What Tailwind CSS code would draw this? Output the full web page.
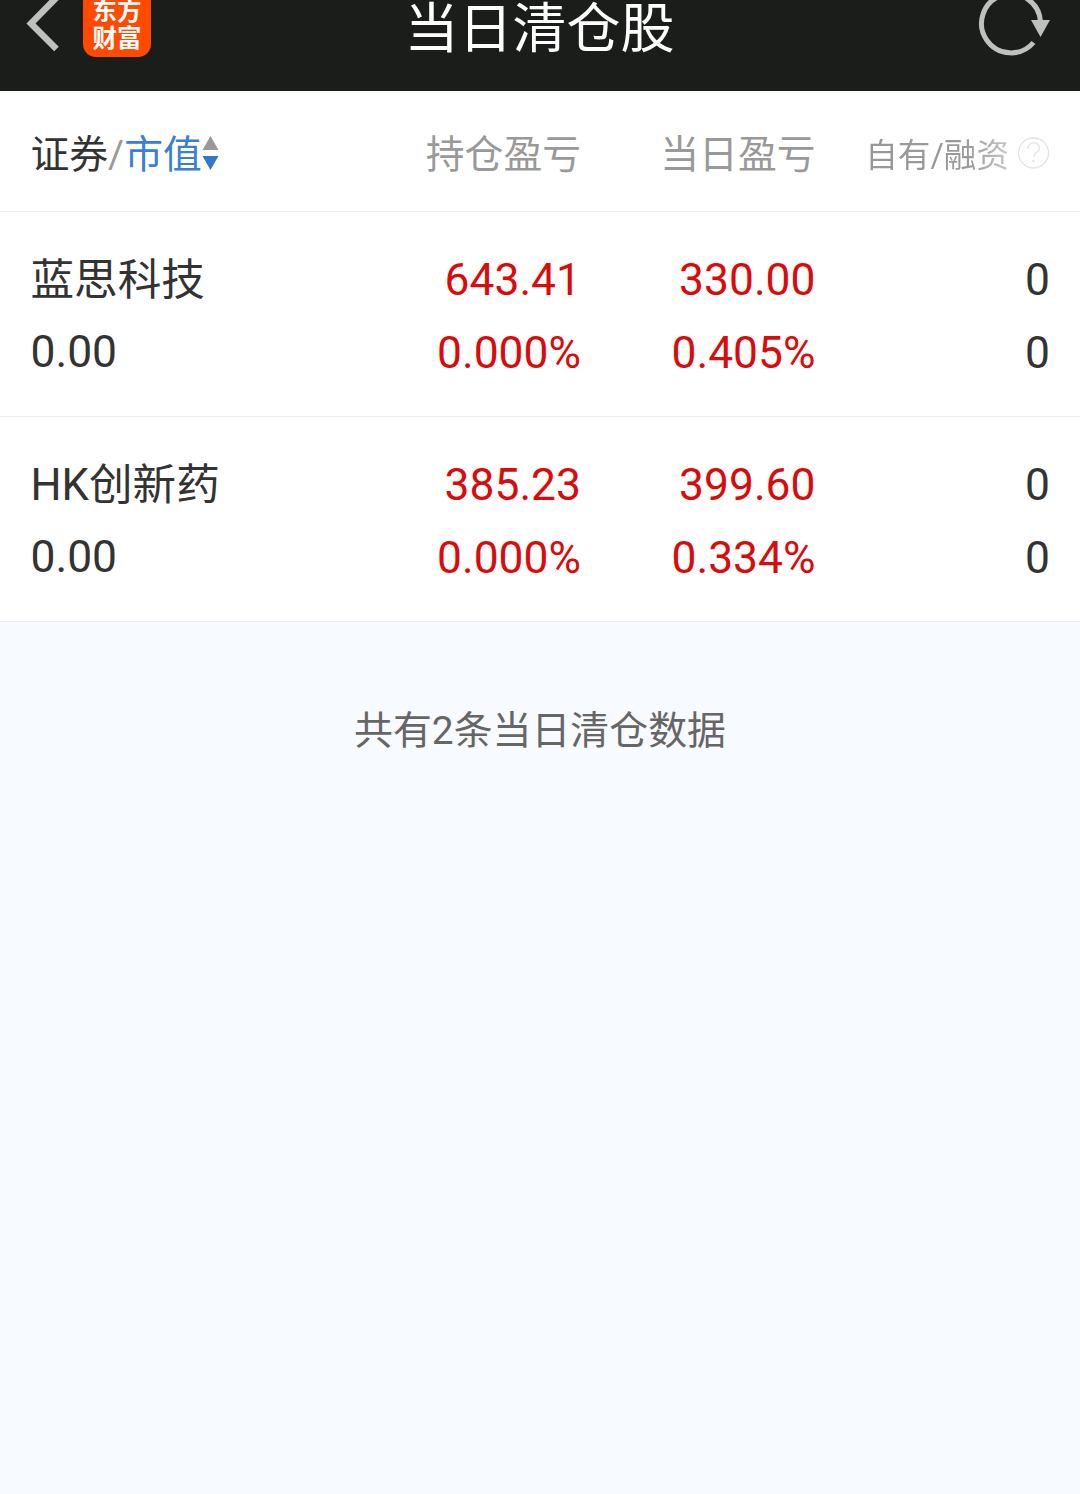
<!DOCTYPE html>
<html lang="zh-CN">
<head>
    <meta charset="UTF-8">
    <meta name="viewport" content="width=device-width, initial-scale=1.0">
    <title>当日清仓股</title>
    <script src="https://cdn.jsdelivr.net/npm/@tailwindcss/browser@4"></script>
</head>
<body class="bg-[#f7faff] min-h-screen font-[Roboto,'Noto_Sans_CJK_SC',sans-serif] text-[#333] overflow-hidden">
    <!-- Title bar -->
    <header class="h-[91px] bg-[#1a1d1a] flex items-start justify-between">
        <div class="w-[200px] flex shrink-0">
            <svg class="w-[83px] h-[91px] shrink-0" viewBox="0 0 83 91" fill="none">
                <path d="M58 -4L31 23.500L56.500 49" stroke="#c0c0c0" stroke-width="6.500" />
            </svg>
            <div class="w-[68px] h-[68px] -mt-[11px] rounded-[13px] bg-[#ff4a00] text-white text-[24.500px] leading-[27px] font-bold text-center pt-[7px] font-['Noto_Sans_CJK_SC',sans-serif]">
                <div>东方</div>
                <div>财富</div>
            </div>
        </div>
        <h1 class="text-white text-[54px] leading-[60px] -ml-[1px]">当日清仓股</h1>
        <svg class="w-[200px] h-[91px] shrink-0" viewBox="880 0 200 91" fill="none">
            <path d="M1033.500 42.500A29.500 29.500 0 1 1 1040.500 22" stroke="#c0c0c0" stroke-width="5" />
            <path d="M1031 20H1050L1040.500 37Z" fill="#c0c0c0" />
        </svg>
    </header>

    <main>
        <!-- Column headings -->
        <div class="h-[121px] bg-white border-b border-[#eee] grid grid-cols-[315px_235px_234.500px_234.500px] pl-[31px] text-[38.800px] leading-[127px] text-right text-[#999] whitespace-nowrap">
            <div class="flex text-left h-[126px] items-center -ml-[0.500px]">
                <span class="text-[#333]">证券</span><span>/</span><span class="text-[#3a7fd5]">市值</span>
                <svg class="w-[17px] h-[36px] mb-[2px]" viewBox="0 0 17 36">
                    <path d="M0.500 15L8.500 1L16.500 15Z" fill="#999" />
                    <path d="M0.500 21L8.500 35L16.500 21Z" fill="#3277c8" />
                </svg>
            </div>
            <div>持仓盈亏</div>
            <div>当日盈亏</div>
            <div class="flex h-[128px] items-center justify-end gap-[9px] text-[32.600px] leading-[64px]">
                <span class="bg-linear-to-r from-[#999] from-70% to-[#c8c8c8] bg-clip-text text-transparent mt-[2px]">自有/融资</span>
                <svg class="w-[32px] h-[32px] mb-[4px]" viewBox="0 0 32 32" fill="none" stroke="#e2e2e2">
                    <circle cx="15.500" cy="16" r="15" stroke-width="1.300" />
                    <path d="M10 12C10 4 21.500 4 21.500 11.500C21.500 15.500 15.500 15 15.500 20" stroke-width="1.300" />
                    <circle cx="15.500" cy="24" r="0.800" fill="#e2e2e2" />
                </svg>
            </div>
        </div>

        <!-- Positions -->
        <div class="h-[205px] bg-white border-b border-[#eee] grid grid-cols-[315px_235px_234.500px_234.500px] pl-[31px] pt-[32px] text-[44.400px] leading-[73px] text-right">
            <div class="text-left -ml-[0.500px]">
                <div class="text-[43.600px] leading-[74px]">蓝思科技</div>
                <div class="leading-[68px]">0.00</div>
            </div>
            <div class="text-[#d90b0b]">
                <div>643.41</div>
                <div>0.000%</div>
            </div>
            <div class="text-[#d90b0b]">
                <div>330.00</div>
                <div>0.405%</div>
            </div>
            <div>
                <div>0</div>
                <div>0</div>
            </div>
        </div>
        <div class="h-[205px] bg-white border-b border-[#eee] grid grid-cols-[315px_235px_234.500px_234.500px] pl-[31px] pt-[32px] text-[44.400px] leading-[73px] text-right">
            <div class="text-left -ml-[0.500px]">
                <div class="text-[43.600px] leading-[74px]">HK创新药</div>
                <div class="leading-[68px]">0.00</div>
            </div>
            <div class="text-[#d90b0b]">
                <div>385.23</div>
                <div>0.000%</div>
            </div>
            <div class="text-[#d90b0b]">
                <div>399.60</div>
                <div>0.334%</div>
            </div>
            <div>
                <div>0</div>
                <div>0</div>
            </div>
        </div>

        <p class="pt-[80px] text-center text-[38.900px] leading-[58px] text-[#666]">共有2条当日清仓数据</p>
    </main>
</body>
</html>
